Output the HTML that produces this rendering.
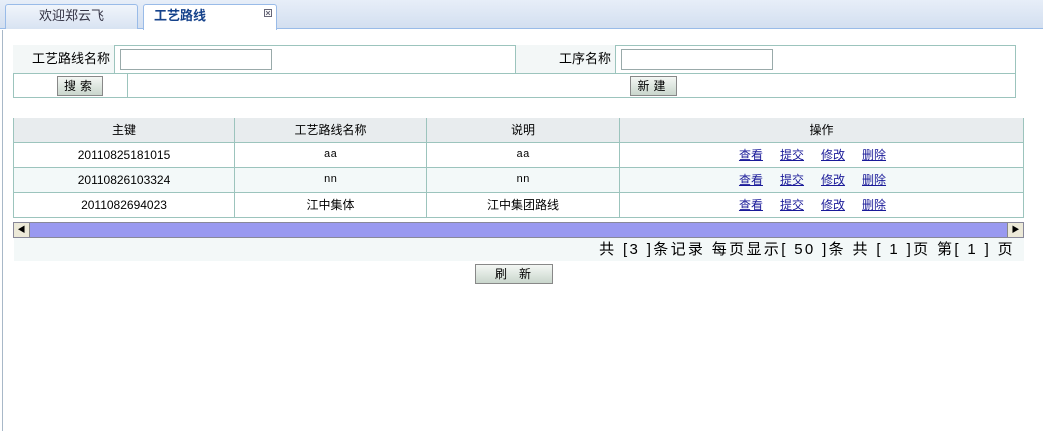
<html><head><style>
*{margin:0;padding:0;box-sizing:border-box}
body{width:1043px;height:431px;background:#fff;font-family:"Liberation Sans","Noto Sans CJK SC",sans-serif;font-size:12px;position:relative;overflow:hidden;color:#000}
.a{position:absolute}
.tab{position:absolute;top:4px;height:25px;border:1px solid #99bbe8;border-bottom:none;border-radius:3px 3px 0 0;text-align:center;line-height:22px;font-size:13px}
.btn{position:absolute;border:1px solid #888;background:linear-gradient(#f4f7f4,#c9d6cc);text-align:center;font-size:12px;line-height:18px;letter-spacing:4px}
.inp{position:absolute;height:21px;border:1px solid #9aa;background:#fff}
table{border-collapse:collapse;position:absolute;left:13px;top:118px;width:1011px}
td{border:1px solid #9cc4bd;text-align:center;height:25px;font-size:12px}
th{background:#e8ecee;font-weight:normal;height:24px;border:1px solid #9cc4bd;border-top:none;font-size:12px}
td.op{padding-right:18px}
a{color:#1a1a99;text-decoration:underline;margin:0 8.5px}
.r2 td{background:#f3f9f9}
.m{font-family:"Liberation Mono",monospace;font-size:11px}
</style></head><body>
<div class="a" style="left:0;top:0;width:1043px;height:29px;background:linear-gradient(#e7eef8,#d3dff0);border-bottom:1px solid #99bbe8"></div>
<div class="tab" style="left:5px;width:133px;background:linear-gradient(#f1f5fb,#d8e3f2);color:#334">欢迎郑云飞</div>
<div class="tab" style="left:143px;width:134px;height:26px;background:#fff;font-weight:bold;color:#15428b;text-align:left;padding-left:10px">工艺路线<span style="position:absolute;left:119px;top:-1px;font-size:10px;color:#667">⊠</span></div>
<div class="a" style="left:2px;top:30px;width:1px;height:401px;background:#a8b8c8"></div>
<div class="a" style="left:13px;top:45px;width:1003px;height:53px;border:1px solid #9cc4bd"></div>
<div class="a" style="left:13px;top:73px;width:1003px;height:1px;background:#9cc4bd"></div>
<div class="a" style="left:13px;top:45px;width:102px;height:28px;background:#f3f7f7;border-right:1px solid #9cc4bd;text-align:right;line-height:28px;padding-right:4px;font-size:13px">工艺路线名称</div>
<div class="inp" style="left:120px;top:49px;width:152px"></div>
<div class="a" style="left:515px;top:45px;width:101px;height:28px;background:#f3f7f7;border-left:1px solid #9cc4bd;border-right:1px solid #9cc4bd;text-align:right;line-height:28px;padding-right:4px;font-size:13px">工序名称</div>
<div class="inp" style="left:621px;top:49px;width:152px"></div>
<div class="a" style="left:127px;top:73px;width:1px;height:25px;background:#9cc4bd"></div>
<div class="btn" style="left:57px;top:76px;width:46px;height:20px">搜索</div>
<div class="btn" style="left:630px;top:76px;width:47px;height:20px">新建</div>
<table>
<tr><th style="width:221px">主键</th><th style="width:192px">工艺路线名称</th><th style="width:193px">说明</th><th>操作</th></tr>
<tr><td>20110825181015</td><td class="m">aa</td><td class="m">aa</td><td class="op"><a>查看</a><a>提交</a><a>修改</a><a>删除</a></td></tr>
<tr class="r2"><td>20110826103324</td><td class="m">nn</td><td class="m">nn</td><td class="op"><a>查看</a><a>提交</a><a>修改</a><a>删除</a></td></tr>
<tr><td>2011082694023</td><td>江中集体</td><td>江中集团路线</td><td class="op"><a>查看</a><a>提交</a><a>修改</a><a>删除</a></td></tr>
</table>
<div class="a" style="left:13px;top:222px;width:1011px;height:16px;background:#9999f0;border:1px solid #889"></div>
<div class="a" style="left:14px;top:223px;width:16px;height:14px;background:#ece9d8;border-right:1px solid #888;font-size:8px;line-height:14px;text-align:center">◀</div>
<div class="a" style="left:1007px;top:223px;width:16px;height:14px;background:#ece9d8;border-left:1px solid #888;font-size:8px;line-height:14px;text-align:center">▶</div>
<div class="a" style="left:14px;top:238px;width:1010px;height:23px;background:#f3f8f8;text-align:right;font-size:15px;line-height:24px;padding-right:9px;letter-spacing:2.35px;white-space:nowrap">共 [3 ]条记录 每页显示[ 50 ]条 共 [ 1 ]页 第[ 1 ] 页</div>
<div class="btn" style="left:475px;top:264px;width:78px;height:20px;letter-spacing:12px;padding-left:10px">刷新</div>
</body></html>
